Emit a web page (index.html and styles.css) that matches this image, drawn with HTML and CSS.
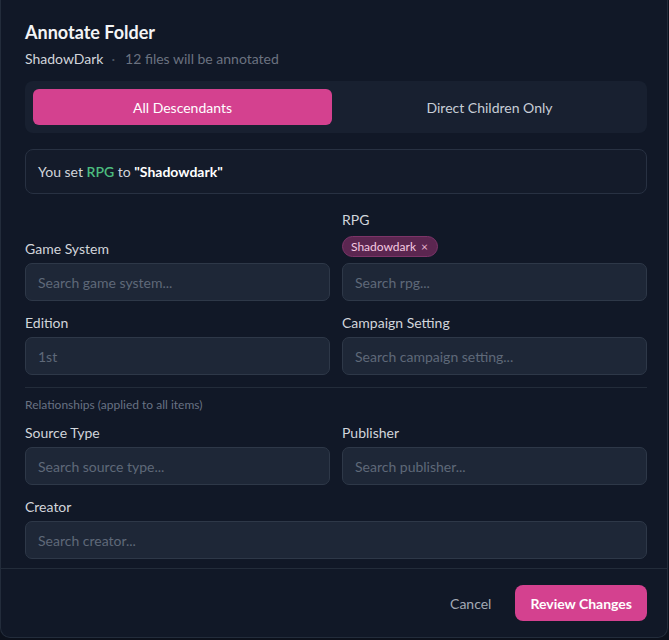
FILE: index.html
```html
<!DOCTYPE html>
<html lang="en">
<head>
<meta charset="utf-8">
<title>Annotate Folder</title>
<link rel="stylesheet" href="styles.css">
</head>
<body>
<div class="modal">
  <div class="content">
    <h1 class="title">Annotate Folder</h1>
    <div class="subtitle"><span class="folder">ShadowDark</span><span class="dot">·</span><span class="count">12 files will be annotated</span></div>
    <div class="toggle">
      <button class="toggle-btn active">All Descendants</button>
      <button class="toggle-btn">Direct Children Only</button>
    </div>
    <div class="info">You set <span class="key">RPG</span> to <strong>"Shadowdark"</strong></div>
    <div class="grid">
      <div class="field">
        <label class="label">Game System</label>
        <div class="input">Search game system...</div>
      </div>
      <div class="field">
        <label class="label">RPG</label>
        <div class="chips"><span class="chip">Shadowdark <span class="x">×</span></span></div>
        <div class="input">Search rpg...</div>
      </div>
      <div class="field">
        <label class="label">Edition</label>
        <div class="input">1st</div>
      </div>
      <div class="field">
        <label class="label">Campaign Setting</label>
        <div class="input">Search campaign setting...</div>
      </div>
    </div>
    <div class="divider"></div>
    <div class="section-note">Relationships (applied to all items)</div>
    <div class="grid">
      <div class="field">
        <label class="label">Source Type</label>
        <div class="input">Search source type...</div>
      </div>
      <div class="field">
        <label class="label">Publisher</label>
        <div class="input">Search publisher...</div>
      </div>
      <div class="field full">
        <label class="label">Creator</label>
        <div class="input">Search creator...</div>
      </div>
    </div>
  </div>
  <div class="footer">
    <button class="btn-cancel">Cancel</button>
    <button class="btn-primary">Review Changes</button>
  </div>
</div>
</body>
</html>
```

FILE: styles.css
```css
* { box-sizing: border-box; }
html, body {
  margin: 0;
  padding: 0;
  background: #0c111c;
  font-family: Lato, "Noto Sans", sans-serif;
}
.modal {
  width: 668px;
  height: 638px;
  background: #111827;
  border: 1px solid #232c3b;
  border-top: none;
  border-radius: 0 0 10px 10px;
  display: flex;
  flex-direction: column;
}
.content {
  padding: 18px 20px 8px 24px;
  flex: 1;
}
.title {
  margin: 0;
  font-size: 18px;
  line-height: 28px;
  font-weight: 700;
  color: #f3f4f6;
}
.subtitle {
  margin-top: 3px;
  font-size: 14px;
  line-height: 20px;
  display: flex;
  align-items: center;
}
.folder { color: #d1d5db; }
.dot { color: #4b5563; margin: 0 10px 0 8px; }
.count { color: #6b7280; }
.toggle {
  margin-top: 12px;
  display: flex;
  gap: 8px;
  padding: 8px;
  background: #182030;
  border-radius: 8px;
}
.toggle-btn {
  flex: 1;
  height: 36px;
  border: none;
  border-radius: 6px;
  background: transparent;
  color: #c7cdd6;
  font-family: inherit;
  font-size: 14px;
}
.toggle-btn.active {
  background: #d4418f;
  color: #ffffff;
}
.info {
  margin-top: 16px;
  border: 1px solid #283142;
  background: #141b2a;
  border-radius: 8px;
  padding: 12px 12px;
  font-size: 14px;
  line-height: 19px;
  color: #d1d5db;
}
.info .key { color: #4cbd7f; font-weight: 600; }
.info strong { color: #ffffff; font-weight: 700; }
.grid {
  margin-top: 16px;
  display: grid;
  grid-template-columns: 1fr 1fr;
  column-gap: 12px;
  row-gap: 12px;
  align-items: end;
}
.field { display: flex; flex-direction: column; }
.field.full { grid-column: 1 / -1; }
.label {
  font-size: 14px;
  line-height: 20px;
  color: #d1d5db;
  margin-bottom: 4px;
}
.chips { display: flex; margin: 2px 0 6px; }
.chip {
  display: inline-flex;
  align-items: center;
  height: 21px;
  padding: 0 9px 0 8px;
  border-radius: 11px;
  background: #5b2650;
  border: 1px solid #7c3468;
  color: #f5c9e1;
  font-size: 12px;
}
.chip .x { margin-left: 5px; font-size: 12px; color: #e7b2cf; }
.input {
  height: 38px;
  display: flex;
  align-items: center;
  padding: 0 12px;
  background: #1e2737;
  border: 1px solid #2e3848;
  border-radius: 7px;
  color: #5f6979;
  font-size: 14px;
}
.divider {
  height: 1px;
  background: #232c3a;
  margin-top: 12px;
}
.section-note {
  margin-top: 9px;
  font-size: 12px;
  line-height: 16px;
  color: #687283;
}
.section-note + .grid { margin-top: 10px; }
.footer {
  border-top: 1px solid #232c3a;
  display: flex;
  justify-content: flex-end;
  align-items: center;
  gap: 24px;
  padding: 16px 20px 16px 24px;
}
.btn-cancel {
  background: transparent;
  border: none;
  color: #a3a9b4;
  font-family: inherit;
  font-size: 14px;
  padding: 0;
}
.btn-primary {
  height: 36px;
  padding: 0 15px;
  border: none;
  border-radius: 8px;
  background: #d4418f;
  color: #ffffff;
  font-family: inherit;
  font-size: 14px;
  font-weight: 700;
}
```
